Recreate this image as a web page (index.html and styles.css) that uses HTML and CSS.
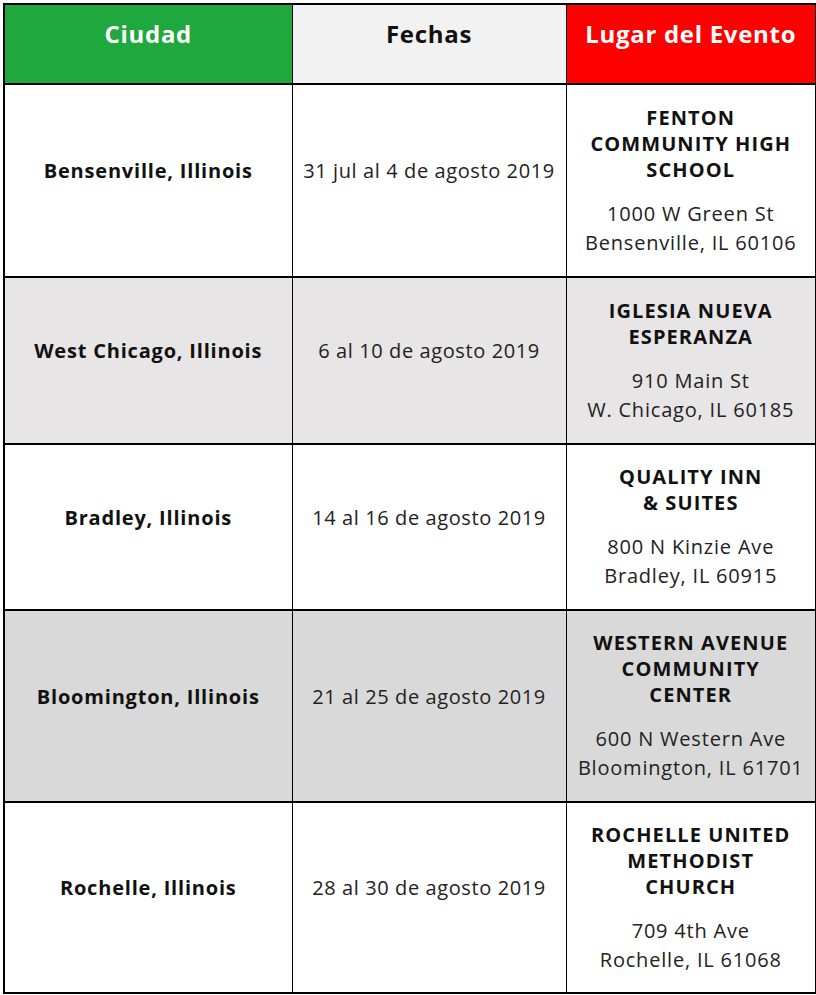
FILE: index.html
```html
<!DOCTYPE html>
<html lang="es">
<head>
<meta charset="utf-8">
<title>Eventos</title>
<link rel="stylesheet" href="styles.css">
</head>
<body>
<table class="events">
  <colgroup>
    <col class="c-city">
    <col class="c-date">
    <col class="c-place">
  </colgroup>
  <thead>
    <tr class="head-row">
      <th class="h-city">Ciudad</th>
      <th class="h-date">Fechas</th>
      <th class="h-place">Lugar del Evento</th>
    </tr>
  </thead>
  <tbody>
    <tr class="r1">
      <td class="city">Bensenville, Illinois</td>
      <td class="date">31 jul al 4 de agosto 2019</td>
      <td class="place"><div class="pname">FENTON<br>COMMUNITY HIGH<br>SCHOOL</div><div class="paddr">1000 W Green St<br>Bensenville, IL 60106</div></td>
    </tr>
    <tr class="r2 alt">
      <td class="city">West Chicago, Illinois</td>
      <td class="date">6 al 10 de agosto 2019</td>
      <td class="place"><div class="pname">IGLESIA NUEVA<br>ESPERANZA</div><div class="paddr">910 Main St<br>W. Chicago, IL 60185</div></td>
    </tr>
    <tr class="r3">
      <td class="city">Bradley, Illinois</td>
      <td class="date">14 al 16 de agosto 2019</td>
      <td class="place"><div class="pname">QUALITY INN<br>&amp; SUITES</div><div class="paddr">800 N Kinzie Ave<br>Bradley, IL 60915</div></td>
    </tr>
    <tr class="r4 grey">
      <td class="city">Bloomington, Illinois</td>
      <td class="date">21 al 25 de agosto 2019</td>
      <td class="place"><div class="pname">WESTERN AVENUE<br>COMMUNITY<br>CENTER</div><div class="paddr">600 N Western Ave<br>Bloomington, IL 61701</div></td>
    </tr>
    <tr class="r5">
      <td class="city">Rochelle, Illinois</td>
      <td class="date">28 al 30 de agosto 2019</td>
      <td class="place"><div class="pname">ROCHELLE UNITED<br>METHODIST<br>CHURCH</div><div class="paddr">709 4th Ave<br>Rochelle, IL 61068</div></td>
    </tr>
  </tbody>
</table>
</body>
</html>
```
FILE: styles.css
```css
html, body {
  margin: 0;
  padding: 0;
  background: #ffffff;
}
body {
  padding: 3px 0 0 3px;
  font-family: "Open Sans", "DejaVu Sans", sans-serif;
  color: #111111;
}
.events {
  border-collapse: collapse;
  width: 812px;
  table-layout: fixed;
  border: 2px solid #000;
}
.c-city { width: 288px; }
.c-date { width: 274px; }
.c-place { width: 250px; }
.events th, .events td {
  border-left: 1px solid #000;
  border-right: 1px solid #000;
  border-top: 2px solid #000;
  border-bottom: 2px solid #000;
  text-align: center;
  padding: 0;
  white-space: nowrap;
}
.events .head-row th {
  height: 80px;
  vertical-align: top;
  padding-top: 13px;
  font-size: 24px;
  font-weight: 700;
  line-height: 32px;
  letter-spacing: 0.7px;
  box-sizing: border-box;
}
.h-city { background: #1fa83d; color: #fff; }
.h-date { background: #f2f2f2; color: #111; }
.h-place { background: #fe0000; color: #fff; }
.events .r1 td { height: 193px; }
.events .r2 td { height: 167px; }
.events .r3 td { height: 166px; }
.events .r4 td { height: 192px; }
.events .r5 td { height: 191px; }
.events td { box-sizing: border-box; vertical-align: middle; }
.events .city {
  font-weight: 700;
  font-size: 20px;
  letter-spacing: 0.8px;
  padding-bottom: 20px;
}
.events .date {
  font-size: 20px;
  font-weight: 400;
  letter-spacing: 0.6px;
  color: #222;
  padding-bottom: 20px;
}
.pname {
  font-weight: 700;
  font-size: 20px;
  line-height: 26px;
  letter-spacing: 1.1px;
}
.paddr {
  margin-top: 16px;
  font-size: 20px;
  line-height: 29px;
  letter-spacing: 0.8px;
  color: #222;
}
.events .alt td { background: #e7e5e6; }
.events .grey td { background: #d9d9d9; }
```
